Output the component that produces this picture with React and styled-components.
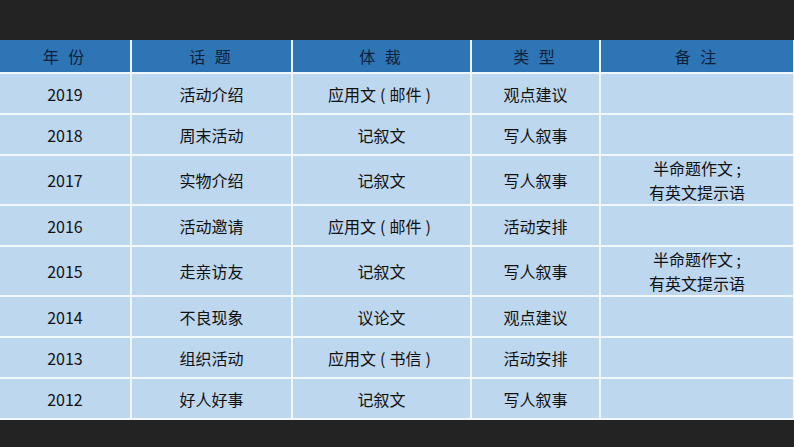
import React from "react";
import styled, { createGlobalStyle } from "styled-components";

const GlobalStyle = createGlobalStyle`
  html, body {
    margin: 0;
    padding: 0;
    background: #232323;
  }
  body {
    font-family: "Noto Sans CJK SC", "Noto Sans", sans-serif;
  }
`;

const Page = styled.div`
  width: 794px;
  height: 447px;
  padding-top: 40px;
  box-sizing: border-box;
  background: #232323;
`;

const Table = styled.table`
  width: 794px;
  border-collapse: collapse;
  table-layout: fixed;
  font-size: 16px;
`;

const HeadRow = styled.tr`
  height: 33px;
  background: #2e75b6;
`;

const HeadCell = styled.th`
  padding: 0;
  font-weight: normal;
  color: #112039;
  letter-spacing: 3px;
  text-align: center;
  border: 2px solid #eef5fb;
  border-top: none;
  &:first-child {
    border-left: none;
  }
`;

const Row = styled.tr`
  height: ${(p) => (p.$tall ? "50px" : "41px")};
  background: #bdd7ee;
`;

const Cell = styled.td`
  padding: 0;
  color: #111;
  text-align: center;
  line-height: 24px;
  border: 2px solid #f2f7fc;
  &:first-child {
    border-left: none;
  }
`;

const Paren = styled.span`
  margin: 0 4px;
`;

const cols = [131, 161, 179, 129, 194];
const heads = ["年 份", "话 题", "体 裁", "类 型", "备 注"];

const note = ["半命题作文 ;", "有英文提示语"];

const genre = (kind) => (
  <>
    应用文<Paren>(</Paren>
    {kind}
    <Paren>)</Paren>
  </>
);

const rows = [
  ["2019", "活动介绍", genre("邮件"), "观点建议"],
  ["2018", "周末活动", "记叙文", "写人叙事"],
  ["2017", "实物介绍", "记叙文", "写人叙事", note],
  ["2016", "活动邀请", genre("邮件"), "活动安排"],
  ["2015", "走亲访友", "记叙文", "写人叙事", note],
  ["2014", "不良现象", "议论文", "观点建议"],
  ["2013", "组织活动", genre("书信"), "活动安排"],
  ["2012", "好人好事", "记叙文", "写人叙事"],
];

export default function App() {
  return (
    <>
      <GlobalStyle />
      <Page>
        <Table>
          <colgroup>
            {cols.map((w, i) => (
              <col key={i} style={{ width: w }} />
            ))}
          </colgroup>
          <thead>
            <HeadRow>
              {heads.map((h) => (
                <HeadCell key={h}>{h}</HeadCell>
              ))}
            </HeadRow>
          </thead>
          <tbody>
            {rows.map((r) => (
              <Row key={r[0]} $tall={!!r[4]}>
                <Cell>{r[0]}</Cell>
                <Cell>{r[1]}</Cell>
                <Cell>{r[2]}</Cell>
                <Cell>{r[3]}</Cell>
                <Cell>
                  {r[4] &&
                    r[4].map((line) => <div key={line}>{line}</div>)}
                </Cell>
              </Row>
            ))}
          </tbody>
        </Table>
      </Page>
    </>
  );
}
